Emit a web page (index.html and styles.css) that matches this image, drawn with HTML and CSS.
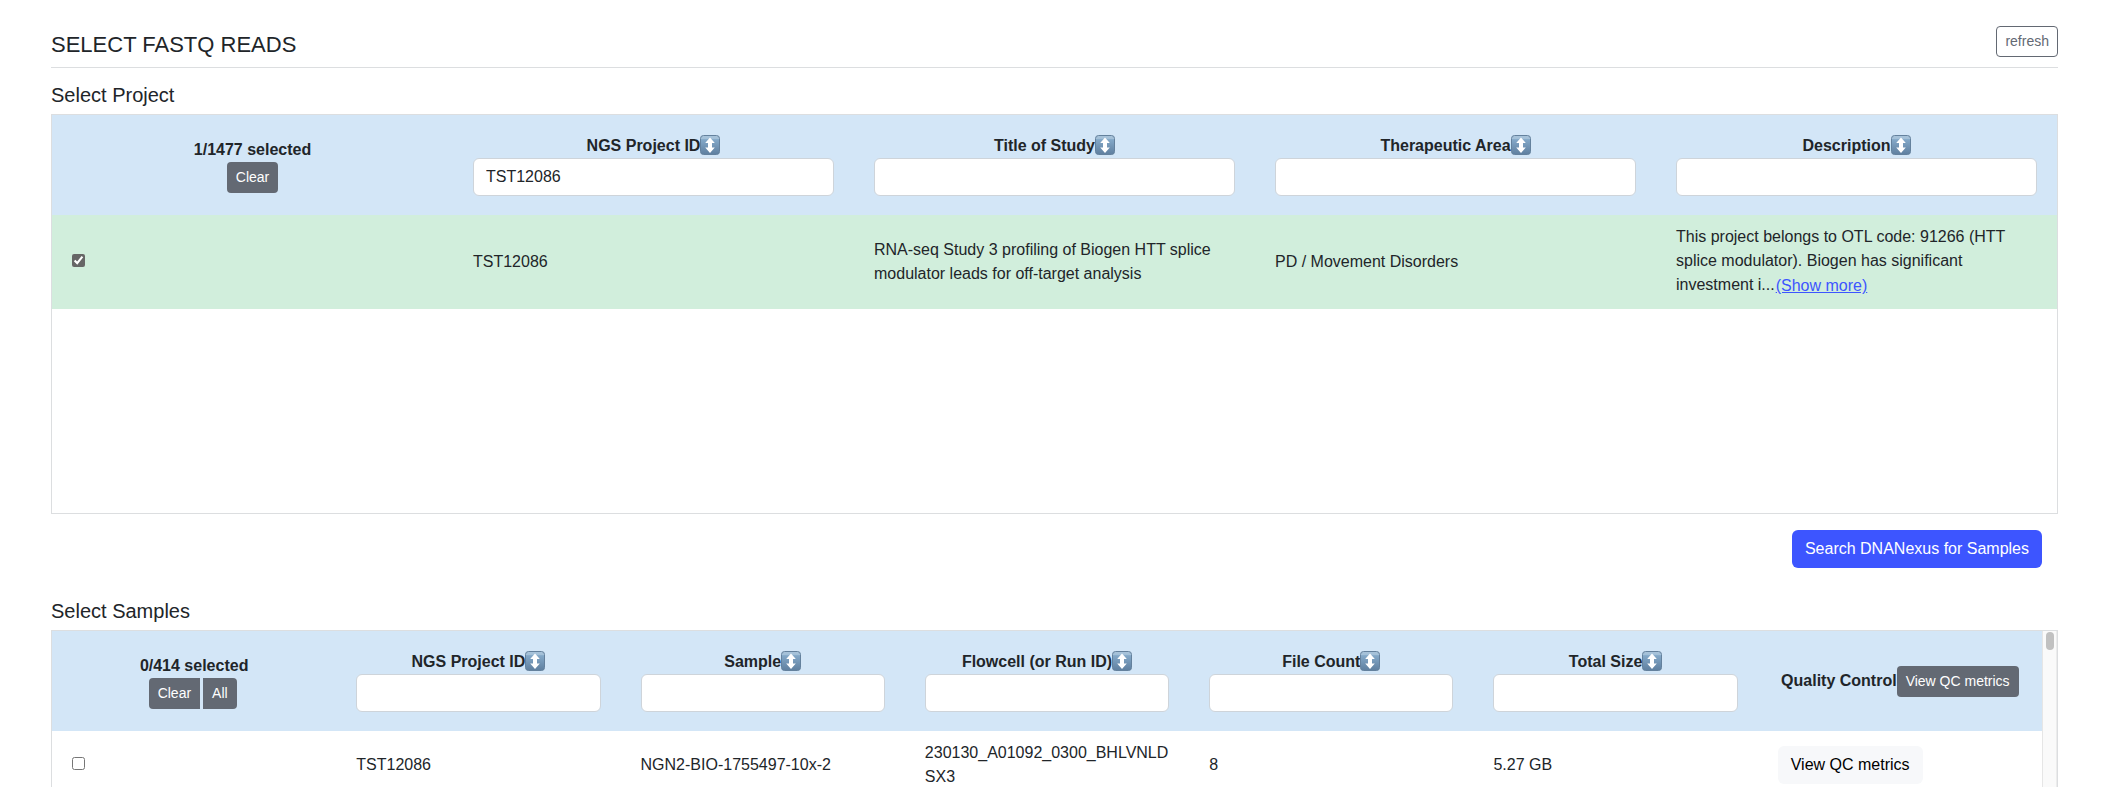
FILE: index.html
```html
<!DOCTYPE html>
<html lang="en">
<head>
<meta charset="utf-8">
<title>Select FASTQ Reads</title>
<link rel="stylesheet" href="styles.css">
</head>
<body>
<svg class="defs" aria-hidden="true">
  <defs>
    <linearGradient id="key" x1="0" y1="0" x2="0" y2="1">
      <stop offset="0" stop-color="#a9c4da"/>
      <stop offset="0.16" stop-color="#a3c0d8"/>
      <stop offset="0.22" stop-color="#83a8c8"/>
      <stop offset="1" stop-color="#5f7f9f"/>
    </linearGradient>
    <symbol id="sort" viewBox="0 0 20 20">
      <rect x="0.5" y="0.5" width="19" height="19" rx="3" fill="url(#key)" stroke="#64819d"/>
      <path d="M10 2.5 L14.8 8 H12 V12.5 H14.8 L10 18 L5.2 12.5 H8 V8 H5.2 Z" fill="#fff"/>
    </symbol>
  </defs>
</svg>
<main class="page">
  <header class="page-header">
    <h1 class="page-title">SELECT FASTQ READS</h1>
    <button type="button" class="btn btn-sm btn-outline">refresh</button>
  </header>

  <section>
    <h2 class="section-title">Select Project</h2>
    <div class="table-box">
      <table class="grid">
        <thead>
          <tr>
            <th><div>1/1477 selected</div><div class="btn-row"><button type="button" class="btn btn-sm btn-secondary">Clear</button></div></th>
            <th><label class="col-label" for="p-id">NGS Project ID<svg class="sort"><use href="#sort"/></svg></label><input class="field" id="p-id" type="text" value="TST12086"></th>
            <th><label class="col-label" for="p-title">Title of Study<svg class="sort"><use href="#sort"/></svg></label><input class="field" id="p-title" type="text"></th>
            <th><label class="col-label" for="p-area">Therapeutic Area<svg class="sort"><use href="#sort"/></svg></label><input class="field" id="p-area" type="text"></th>
            <th><label class="col-label" for="p-desc">Description<svg class="sort"><use href="#sort"/></svg></label><input class="field" id="p-desc" type="text"></th>
          </tr>
        </thead>
        <tbody>
          <tr class="selected">
            <td><input class="check" type="checkbox" aria-label="Select project TST12086" checked></td>
            <td>TST12086</td>
            <td>RNA-seq Study 3 profiling of Biogen HTT splice modulator leads for off-target analysis</td>
            <td>PD / Movement Disorders</td>
            <td>This project belongs to OTL code: 91266 (HTT splice modulator). Biogen has significant investment i...<button type="button" class="btn-link">(Show more)</button></td>
          </tr>
        </tbody>
      </table>
    </div>
    <div class="actions">
      <button type="button" class="btn btn-primary">Search DNANexus for Samples</button>
    </div>
  </section>

  <section>
    <h2 class="section-title">Select Samples</h2>
    <div class="table-box">
      <table class="grid">
        <thead>
          <tr>
            <th><div>0/414 selected</div><div class="btn-row btn-group"><button type="button" class="btn btn-sm btn-secondary">Clear</button><button type="button" class="btn btn-sm btn-secondary">All</button></div></th>
            <th><label class="col-label" for="s-id">NGS Project ID<svg class="sort"><use href="#sort"/></svg></label><input class="field" id="s-id" type="text"></th>
            <th><label class="col-label" for="s-sample">Sample<svg class="sort"><use href="#sort"/></svg></label><input class="field" id="s-sample" type="text"></th>
            <th><label class="col-label" for="s-flow">Flowcell (or Run ID)<svg class="sort"><use href="#sort"/></svg></label><input class="field" id="s-flow" type="text"></th>
            <th><label class="col-label" for="s-count">File Count<svg class="sort"><use href="#sort"/></svg></label><input class="field" id="s-count" type="text"></th>
            <th><label class="col-label" for="s-size">Total Size<svg class="sort"><use href="#sort"/></svg></label><input class="field" id="s-size" type="text"></th>
            <th><div class="qc">Quality Control<button type="button" class="btn btn-sm btn-secondary">View QC metrics</button></div></th>
          </tr>
        </thead>
        <tbody>
          <tr>
            <td><input class="check" type="checkbox" aria-label="Select sample NGN2-BIO-1755497-10x-2"></td>
            <td>TST12086</td>
            <td>NGN2-BIO-1755497-10x-2</td>
            <td>230130_A01092_0300_BHLVNLDSX3</td>
            <td>8</td>
            <td>5.27 GB</td>
            <td><button type="button" class="btn btn-light">View QC metrics</button></td>
          </tr>
        </tbody>
      </table>
      <div class="scroll-track" aria-hidden="true"><div class="scroll-thumb"></div></div>
    </div>
  </section>
</main>
</body>
</html>
```

FILE: styles.css
```css
*,
*::before,
*::after {
  box-sizing: border-box;
}

body {
  margin: 0;
  height: 100vh;
  overflow: hidden;
  background: #fff;
  color: #212529;
  font: 16px/24px "Liberation Sans", Arial, sans-serif;
}

.defs {
  position: absolute;
  width: 0;
  height: 0;
}

.page {
  padding: 26px 50px 0 51px;
}

.page-header {
  display: flex;
  align-items: flex-end;
  justify-content: space-between;
  margin-bottom: 14px;
  padding-bottom: 10px;
  border-bottom: 1px solid #dcdee0;
}

.page-title {
  margin: 0;
  font-size: 22px;
  line-height: 24px;
  font-weight: 400;
}

.section-title {
  margin: 0 0 6px;
  font-size: 20px;
  line-height: 26px;
  font-weight: 400;
}

.table-box {
  display: flex;
  align-items: flex-start;
  height: 400px;
  overflow: hidden;
  border: 1px solid #dcdee0;
}

.grid {
  flex: 1;
  width: 100%;
  min-width: 0;
  table-layout: fixed;
  border-collapse: collapse;
}

.grid th {
  padding: 19px 20px;
  background: #d3e6f7;
  font-weight: 700;
  text-align: center;
  vertical-align: middle;
}

.grid td {
  padding: 10px 20px;
  overflow-wrap: anywhere;
  vertical-align: middle;
}

.selected {
  background: #d1eedc;
}

.col-label {
  display: flex;
  align-items: center;
  justify-content: center;
}

.sort {
  flex: none;
  width: 20px;
  height: 20px;
  margin-bottom: 2px;
}

.field {
  display: block;
  width: 100%;
  height: 38px;
  padding: 6px 12px;
  border: 1px solid #ced4da;
  border-radius: 6px;
  background: #fff;
  color: inherit;
  font: inherit;
  font-weight: 400;
}

.check {
  display: block;
  width: 13px;
  height: 13px;
  margin: 0 0 3px;
  accent-color: #666;
}

.btn {
  padding: 6px 12px;
  border: 1px solid transparent;
  border-radius: 6px;
  font: inherit;
  font-weight: 400;
  white-space: nowrap;
  cursor: pointer;
}

.btn-sm {
  padding: 4px 8px;
  border-radius: 4px;
  font-size: 14px;
  line-height: 21px;
}

.btn-outline {
  border-color: #636973;
  background: #fff;
  color: #636973;
}

.btn-secondary {
  background: #636973;
  color: #fff;
}

.btn-primary {
  background: #3d55ff;
  color: #fff;
}

.btn-light {
  display: block;
  background: #f7f8fa;
  color: #000;
}

.btn-link {
  padding: 0;
  border: 1px solid transparent;
  background: none;
  color: #3d55ff;
  font: inherit;
  text-decoration: underline;
  vertical-align: middle;
  cursor: pointer;
}

.btn-row {
  display: flex;
  justify-content: center;
}

.btn-group .btn {
  margin-right: 3px;
}

.btn-group .btn:first-child {
  border-top-right-radius: 0;
  border-bottom-right-radius: 0;
}

.btn-group .btn:last-child {
  border-top-left-radius: 0;
  border-bottom-left-radius: 0;
}

.qc {
  display: flex;
  align-items: center;
  justify-content: center;
  white-space: nowrap;
}

.actions {
  display: flex;
  justify-content: flex-end;
  padding: 16px 16px 30px;
}

.scroll-track {
  flex: none;
  align-self: stretch;
  width: 15px;
  padding: 1px 2px 0 3px;
  border-left: 1px solid #e6e6e6;
  border-right: 1px solid #ececec;
  background: #fafafa;
}

.scroll-thumb {
  width: 8px;
  height: 18px;
  border-radius: 4px;
  background: #c1c1c1;
}
```
